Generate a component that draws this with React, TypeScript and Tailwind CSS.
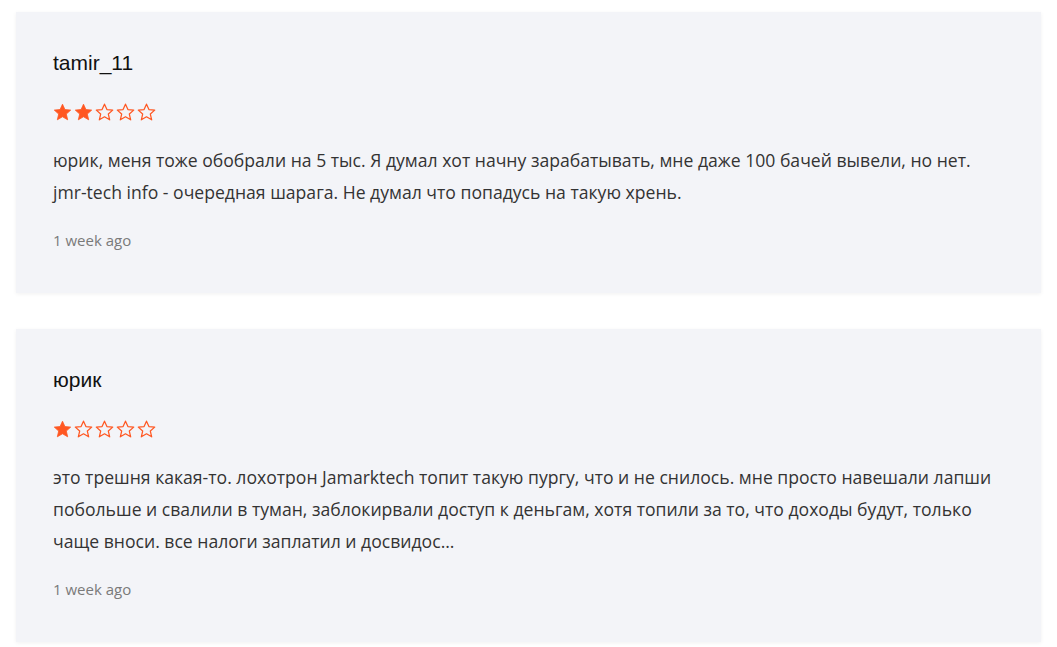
type Review = {
  author: string;
  rating: number;
  text: string;
  date: string;
};

const reviews: Review[] = [
  {
    author: 'tamir_11',
    rating: 2,
    text: 'юрик, меня тоже обобрали на 5 тыс. Я думал хот начну зарабатывать, мне даже 100 бачей вывели, но нет. jmr-tech info - очередная шарага. Не думал что попадусь на такую хрень.',
    date: '1 week ago',
  },
  {
    author: 'юрик',
    rating: 1,
    text: 'это трешня какая-то. лохотрон Jamarktech топит такую пургу, что и не снилось. мне просто навешали лапши побольше и свалили в туман, заблокирвали доступ к деньгам, хотя топили за то, что доходы будут, только чаще вноси. все налоги заплатил и досвидос...',
    date: '1 week ago',
  },
];

function Star({ filled }: { filled: boolean }) {
  return (
    <svg width="19" height="18" viewBox="0 0 24 23" className="shrink-0">
      <path
        d="M12 1.5l3.1 6.9 7.4.7-5.6 5 1.7 7.4L12 17.6l-6.6 3.9 1.7-7.4-5.6-5 7.4-.7z"
        fill={filled ? '#ff5722' : 'none'}
        stroke="#ff5722"
        strokeWidth={filled ? 1 : 1.6}
        strokeLinejoin="round"
      />
    </svg>
  );
}

function Rating({ value }: { value: number }) {
  return (
    <div className="flex items-center gap-[2px]">
      {[1, 2, 3, 4, 5].map((n) => (
        <Star key={n} filled={n <= value} />
      ))}
    </div>
  );
}

function ReviewCard({ review }: { review: Review }) {
  return (
    <div className="bg-[#f3f4f8] shadow-[0_1px_4px_rgba(0,0,0,0.06)] px-[37px] pt-[39px] pb-[43px] flex flex-col">
      <h3 className="font-['Liberation_Sans',Arial,sans-serif] text-[21px] leading-[24px] text-[#111]">
        {review.author}
      </h3>
      <div className="mt-[28px]">
        <Rating value={review.rating} />
      </div>
      <p className="mt-[23px] font-['Open_Sans',sans-serif] text-[17.6px] leading-[32px] text-[#333]">
        {review.text}
      </p>
      <span className="mt-[22px] font-['Open_Sans',sans-serif] text-[15px] leading-[20px] text-[#7a7a7a]">
        {review.date}
      </span>
    </div>
  );
}

export default function App() {
  return (
    <div className="min-h-screen bg-white px-[16px] pt-[12px] pb-[6px] flex flex-col gap-[36px]">
      {reviews.map((r, i) => (
        <ReviewCard key={i} review={r} />
      ))}
    </div>
  );
}
